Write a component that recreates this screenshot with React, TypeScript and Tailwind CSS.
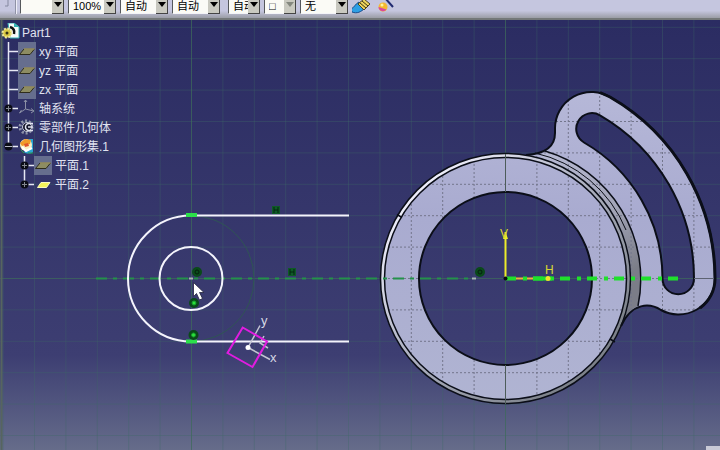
import { ReactNode } from 'react';
import clsx from 'clsx';

const STEP = 31.4;
const ORIGIN = { x: 505.5, y: 278.5 };
const columns = Array.from({ length: 23 }, (_, i) => ORIGIN.x + (i - 16) * STEP);
const rows = Array.from({ length: 14 }, (_, i) => ORIGIN.y + (i - 8) * STEP);

const RING =
  'M380.5 278.5a125 125 0 1 0 250 0a125 125 0 1 0 -250 0Z M419 278.5a86.5 86.5 0 1 0 173 0a86.5 86.5 0 1 0 -173 0Z';
const RIM =
  'M380.5 278.5a125 125 0 1 0 250 0a125 125 0 1 0 -250 0Z M384.5 278.5a121 121 0 1 0 242 0a121 121 0 1 0 -242 0Z';
const LUG_EDGE =
  'M526 155C544 154 555 147 555 133V128A36.500 36.500 0 0 1 610 97A209.500 209.500 0 0 1 715 278.500A36.500 36.500 0 0 1 661 310C650 303 632 302 621 326';
const LUG = `${LUG_EDGE}A125 125 0 0 0 526 155Z`;
const SLOT =
  'M584 142.500A157 157 0 0 1 662.500 278.500A15.700 15.700 0 0 0 694 278.500A188.500 188.500 0 0 0 600 115.300A15.700 15.700 0 0 0 584 142.500Z';

type ComboProps = {
  label: string;
  value?: string;
  className: string;
  disabled?: boolean;
};

const Combo = ({ label, value = '', className, disabled }: ComboProps) => (
  <div className={clsx('grid h-5 shrink-0 border-b border-l border-b-[#f4f4f8] border-l-[#55585c] bg-[#fbfbf6]', className)}>
    <select
      aria-label={label}
      disabled={disabled}
      className="col-start-1 row-start-1 w-full min-w-0 appearance-none pt-1 pr-3 pl-1 text-[11px] leading-4 text-black"
    >
      <option>{value}</option>
    </select>
    <span className="pointer-events-none col-start-1 row-start-1 flex w-3 items-end justify-center justify-self-end border-r border-b border-[#444] bg-[#c9c9c0] pb-1.5">
      <svg viewBox="0 0 8 5" className={clsx('w-2', disabled ? 'fill-[#85887f]' : 'fill-black')}>
        <path d="M0 0h8L4 5Z" />
      </svg>
    </span>
  </div>
);

const Toolbar = () => (
  <header className="flex h-5 items-end overflow-hidden border-b-2 border-[#747879] bg-linear-to-b from-[#c5c6df] from-60% to-[#9b9da6] pb-1">
    <svg viewBox="0 0 20 14" className="w-5 shrink-0 fill-none">
      <path d="M5 6h3V0" stroke="#8589a0" />
      <path d="M15.500 0v14" stroke="#8f92a6" />
      <path d="M16.500 0v14" stroke="#eeeef8" />
    </svg>
    <Combo label="Fill color" className="w-11" />
    <Combo label="Transparency" value="100%" className="ml-1 w-12" />
    <Combo label="Line thickness" value="自动" className="ml-1 w-12" />
    <Combo label="Line type" value="自动" className="ml-1 w-12" />
    <Combo label="Point symbol" value="自动" className="ml-2 w-8" />
    <Combo label="Render style" value="□" className="ml-1 w-8" disabled />
    <Combo label="Layer" value="无" className="ml-1 w-12" />
    <button aria-label="Painter" className="ml-1 shrink-0">
      <svg viewBox="0 0 20 14" className="block w-5">
        <path d="M-1 9C2 8 3 4 7 2l6 6c-4 4-8 6-13 4Z" fill="#2e9fe4" stroke="#174a8a" />
        <path d="M6 4l6-5 6 5-6 6Z" fill="#ecd45e" stroke="#4c431c" />
        <path d="M8 3l6 5M10 1l6 5M13 0l3-3" stroke="#3c3412" />
      </svg>
    </button>
    <button aria-label="Wizard" className="ml-1 shrink-0">
      <svg viewBox="0 0 20 14" className="block w-5">
        <path d="M9-2l8 9" stroke="#202a70" strokeWidth="2" />
        <circle cx="7" cy="7" r="4.500" fill="#f5b92e" />
        <path d="M2.500 7a4.500 4.500 0 0 0 8 2.500Z" fill="#d848a0" />
        <circle cx="6" cy="5" r="1.500" fill="#fff3a0" />
      </svg>
    </button>
  </header>
);

const PlaneIcon = ({ active = false }: { active?: boolean }) => (
  <svg viewBox="0 0 18 19" className={clsx('w-[18px]', !active && 'bg-[#666e8e]')}>
    <path
      d={active ? 'M3.500 12.500L7 7.500h9L12.500 12.500Z' : 'M1.500 12.500L6 7h10.500L12 12.500Z'}
      fill={active ? '#f4f45a' : '#8d8c62'}
      stroke={active ? '#fafac0' : '#2e2c1c'}
    />
    <path d="M6 7h10.500" stroke={active ? 'none' : '#c5b978'} />
  </svg>
);

const AxisIcon = () => (
  <svg viewBox="0 0 18 19" className="w-[18px] fill-none stroke-[#8c90a6]">
    <path d="M7.500 1v9l-6 4M7.500 10l8 2M6 3l1.500-2L9 3M3.500 11l-2 3M13 9.500l3 2.500-3 2" />
  </svg>
);

const BodyIcon = () => (
  <svg viewBox="0 0 18 19" className="w-[18px] fill-none">
    <circle cx="8" cy="9" r="6" stroke="#8d92a8" strokeWidth="3" strokeDasharray="2 1.800" />
    <circle cx="9" cy="9" r="4.500" fill="#17182c" stroke="#c9cddd" />
    <path d="M15 5.500h-4a3.500 3.500 0 0 0 0 7h4M10 9h5" stroke="#e2e4ef" strokeWidth="1.500" />
  </svg>
);

const GeometryIcon = () => (
  <svg viewBox="0 0 18 19" className="w-[18px]">
    <path d="M11 2h4v13c-2 2-7 2-9 0Z" fill="#2aa4d0" />
    <circle cx="8" cy="8" r="6" fill="#f8efc4" />
    <path d="M2 6l5-4 6 1-1 4-8 2Z" fill="#f09a2a" />
    <path d="M6 7l4-1 1 3-4 1Z" fill="#e2532c" />
    <path d="M4 10l4 4 6-3" stroke="#fff" strokeWidth="2" fill="none" />
    <path d="M3 13l3 3M10 16h5" stroke="#2b9b52" fill="none" />
  </svg>
);

const PartIcon = () => (
  <svg viewBox="0 0 20 19" className="w-5">
    <path d="M8 0h6l5 4v11H10Z" fill="#f8fbfb" stroke="#35b2b4" />
    <path d="M14 0v4h5Z" fill="#35b2b4" />
    <path d="M10 4c3 1 5 3 4 7" stroke="#111" strokeWidth="2.500" fill="none" />
    <circle cx="7" cy="10" r="4.500" fill="#d9c945" stroke="#eee9a0" strokeWidth="2" strokeDasharray="2 1.500" />
    <circle cx="7" cy="10" r="1.500" fill="#332f14" />
  </svg>
);

type NodeProps = {
  icon: ReactNode;
  label: string;
  toggle?: 'plus' | 'minus';
  last?: boolean;
  children?: ReactNode;
};

const Gutter = ({ toggle, last }: Pick<NodeProps, 'toggle' | 'last'>) => (
  <svg viewBox="0 0 18 19" className="w-[18px] fill-none">
    <path d={last ? 'M8.500 0v9M8 9.500h10' : 'M8.500 0v19M8 9.500h10'} stroke="#e6e8f4" strokeWidth="1.500" />
    {toggle && (
      <>
        <circle cx="8.500" cy="9.500" r="4" fill="#0b0c16" />
        <path
          d={toggle === 'plus' ? 'M6 9.500h5M8.500 7v5' : 'M5 9.500h7'}
          stroke={toggle === 'plus' ? '#82868f' : '#b4b7c4'}
        />
      </>
    )}
  </svg>
);

const TreeNode = ({ icon, label, toggle, last, children }: NodeProps) => (
  <li>
    <div className="flex h-[19px] items-center">
      {toggle ? (
        <button aria-label={`${toggle === 'plus' ? 'Expand' : 'Collapse'} ${label}`}>
          <Gutter toggle={toggle} last={last} />
        </button>
      ) : (
        <Gutter last={last} />
      )}
      {icon}
      <span className="pl-[3px]">{label}</span>
    </div>
    {children && <ul className="pl-4">{children}</ul>}
  </li>
);

const Tree = () => (
  <nav
    aria-label="Specification tree"
    className="z-10 col-start-1 row-start-1 self-start justify-self-start pt-[3px] text-xs whitespace-nowrap text-[#e0e2f0]"
  >
    <div className="flex h-[19px] items-center gap-[2px]">
      <PartIcon />
      <span>Part1</span>
    </div>
    <ul>
      <TreeNode icon={<PlaneIcon />} label="xy 平面" />
      <TreeNode icon={<PlaneIcon />} label="yz 平面" />
      <TreeNode icon={<PlaneIcon />} label="zx 平面" />
      <TreeNode icon={<AxisIcon />} label="轴系统" toggle="plus" />
      <TreeNode icon={<BodyIcon />} label="零部件几何体" toggle="plus" />
      <TreeNode icon={<GeometryIcon />} label="几何图形集.1" toggle="minus" last>
        <TreeNode icon={<PlaneIcon />} label="平面.1" toggle="plus" />
        <TreeNode icon={<PlaneIcon active />} label="平面.2" toggle="plus" last />
      </TreeNode>
    </ul>
  </nav>
);

const Grid = () => (
  <>
    {columns.map((x) => (
      <path key={x} d={`M${x} 20V450`} />
    ))}
    {rows.map((y) => (
      <path key={y} d={`M0 ${y}H720`} />
    ))}
  </>
);

const Part = () => (
  <g strokeLinejoin="round">
    <path d={`${LUG} ${SLOT}`} fill="url(#plate)" fillRule="evenodd" />
    <path
      d="M545 151A133.500 133.500 0 0 1 638 306Q630 309 624 320L615 340A125 125 0 0 0 540 158Z"
      fill="url(#groove)"
    />
    <path d={RING} fill="url(#plate)" fillRule="evenodd" />
    <g clipPath="url(#solid)" stroke="#73768c" strokeDasharray="2 2">
      <Grid />
    </g>
    <path d={RIM} fill="url(#rim)" fillRule="evenodd" />
    <g fill="none" stroke="#0b0e18" strokeWidth="1.500">
      <circle cx="505.500" cy="278.500" r="125" />
      <circle cx="505.500" cy="278.500" r="121" />
      <circle cx="505.500" cy="278.500" r="86.500" strokeWidth="2" />
      <path d="M545 151A133.500 133.500 0 0 1 638 306" />
      <path d="M535 153A129 129 0 0 1 626 230" strokeWidth="1" />
      <path d={LUG_EDGE} strokeWidth="2" />
      <path d="M600 92.500L610 97A209.500 209.500 0 0 1 715 278.500A36.500 36.500 0 0 1 700 308" strokeWidth="3" />
      <path d={SLOT} strokeWidth="2" />
      <path d="M397 214.500l5 3M610 339l5 3" />
    </g>
    <path d="M505.500 154V192M505.500 365V404" stroke="#4d5c5a" />
    <path d="M694 278.500H714" stroke="#5d6272" />
  </g>
);

const HMark = ({ x, y }: { x: number; y: number }) => (
  <g>
    <rect x={x - 4} y={y - 4} width="8" height="8" fill="#0e5a26" />
    <path d={`M${x - 2} ${y - 3}v6M${x + 2} ${y - 3}v6M${x - 2} ${y}h4`} stroke="#052410" />
  </g>
);

const RoundMark = ({ x, y, bright = false }: { x: number; y: number; bright?: boolean }) => (
  <g>
    <circle cx={x} cy={y} r="5" fill="#0a4a1a" />
    <circle cx={x} cy={y} r="2" fill={bright ? '#2ce03c' : 'none'} stroke={bright ? '#16a02a' : '#051f0c'} />
  </g>
);

const Sketch = () => (
  <g fill="none">
    <path d="M191 215.500A63 63 0 0 1 191 341.500" stroke="#2f5554" />
    <path d="M96 278.500H474" stroke="#24924a" strokeWidth="2" strokeDasharray="11 6 4 6" />
    <path d="M349 215.500H191A63 63 0 0 0 191 341.500H349" stroke="#f4f4fc" strokeWidth="2" />
    <circle cx="191" cy="278.500" r="31.500" stroke="#f4f4fc" strokeWidth="2" />
    <path d="M186 215h11M186 341.500h11" stroke="#2be04a" strokeWidth="4" />
    <HMark x={276} y={210} />
    <HMark x={292} y={272} />
    <RoundMark x={197} y={272} />
    <RoundMark x={194} y={303} bright />
    <RoundMark x={193.5} y={335} bright />
    <RoundMark x={480} y={272} />
    <path d="M189 278.500h4M472 278.500h4" stroke="#a9b5b5" strokeWidth="2" />
    <g stroke="#c3c5d2" strokeWidth="1.500">
      <path d="M248 347.500l12-22M248 347.500l22 12M264 336l-4 7 8 5" />
    </g>
    <path d="M242.700 327.500L267 341.500L252.500 367L227.500 353Z" stroke="#e01ce0" strokeWidth="2" />
    <circle cx="248" cy="347.500" r="2.500" fill="#fff" />
    <g fill="#d6d8e4" className="text-[13px]">
      <text x="261" y="325">y</text>
      <text x="270" y="362">x</text>
    </g>
    <path
      d="M193.500 282.500v14l3-3 3 6.500 3-1.500-3-6h4.500Z"
      fill="#fff"
      stroke="#23243c"
      strokeWidth=".8"
    />
  </g>
);

const OriginAxes = () => (
  <g fill="none" strokeWidth="2">
    <path d="M505.500 278.500V232" stroke="#ecec2a" />
    <path d="M503 239l2.500-7 2.500 7Z" fill="#ecec2a" />
    <path d="M505.500 278.500H548" stroke="#f0b03a" />
    <path d="M506 278.500H680" stroke="#1fe02c" strokeWidth="4" strokeDasharray="10 7 4 6" />
    <path d="M533 278.500H552" stroke="#1fe02c" strokeWidth="4" />
    <circle cx="548" cy="278.500" r="2.500" fill="#f4e02c" />
    <circle cx="505.500" cy="278.500" r="2" fill="#0a0c10" />
    <g fill="#d6d632" className="text-xs">
      <text x="500" y="238">V</text>
      <text x="545" y="274">H</text>
    </g>
  </g>
);

const Viewport = () => (
  <svg
    viewBox="0 20 720 430"
    preserveAspectRatio="xMinYMin slice"
    role="img"
    aria-label="Part1 sketch"
    className="col-start-1 row-start-1 h-full w-full"
  >
    <defs>
      <linearGradient id="plate" gradientUnits="userSpaceOnUse" x1="0" y1="90" x2="0" y2="404">
        <stop offset="0" stopColor="#b6b8d8" />
        <stop offset=".4" stopColor="#a9abd0" />
        <stop offset="1" stopColor="#b0b4d2" />
      </linearGradient>
      <linearGradient id="rim" gradientUnits="userSpaceOnUse" x1="420" y1="190" x2="590" y2="360">
        <stop offset="0" stopColor="#eeeefa" />
        <stop offset=".4" stopColor="#b4b7c8" />
        <stop offset="1" stopColor="#7d828a" />
      </linearGradient>
      <linearGradient id="groove" gradientUnits="userSpaceOnUse" x1="540" y1="150" x2="635" y2="270">
        <stop offset="0" stopColor="#b9bbd6" />
        <stop offset=".6" stopColor="#a3a5b8" />
        <stop offset="1" stopColor="#7b7d88" />
      </linearGradient>
      <clipPath id="solid">
        <path d={RING} clipRule="evenodd" />
        <path d={`${LUG} ${SLOT}`} clipRule="evenodd" />
      </clipPath>
    </defs>
    <g stroke="#3f6a68" strokeOpacity=".35">
      <Grid />
    </g>
    <path d="M505.500 20V450M191.500 20V450M0 278.500H720" stroke="#3d6b58" strokeOpacity=".6" />
    <path d="M1.500 20V450" stroke="#56655f" strokeWidth="2" />
    <Part />
    <Sketch />
    <OriginAxes />
    <path d="M706 450v-4h14v4Z" fill="#c9cad6" />
  </svg>
);

const App = () => (
  <div className="flex min-h-screen flex-col overflow-hidden font-['Liberation_Sans','Noto_Sans_CJK_SC',sans-serif]">
    <Toolbar />
    <main className="grid flex-1 bg-linear-to-b from-[#2b2c62] via-[#3d3e72] via-78% to-[#666c8a]">
      <Viewport />
      <Tree />
    </main>
  </div>
);

export default App;
